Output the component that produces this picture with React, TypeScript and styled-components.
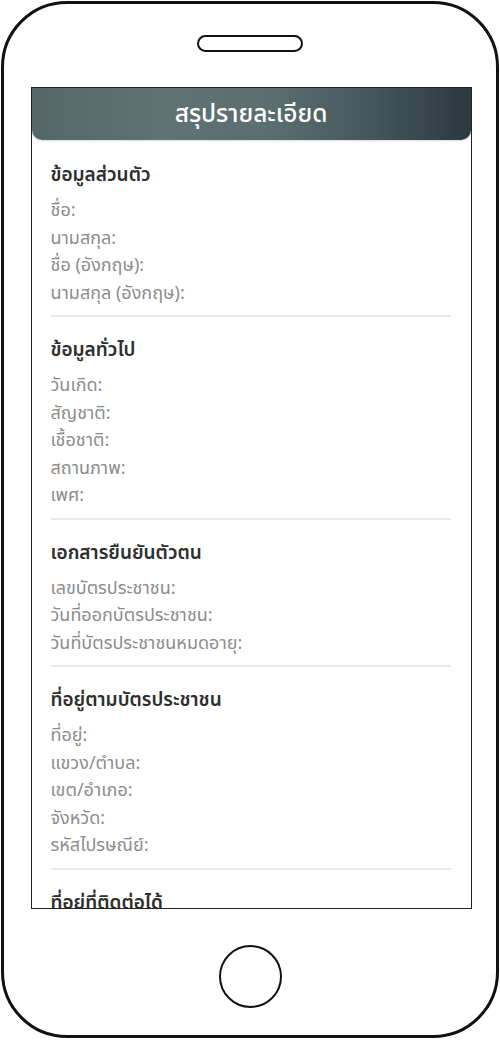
import React from "react";
import styled, { createGlobalStyle } from "styled-components";

const GlobalStyle = createGlobalStyle`
  html, body {
    margin: 0;
    padding: 0;
    background: #fff;
  }
  body {
    font-family: "Noto Sans Thai", "Noto Sans Thai UI", "Noto Sans", "DejaVu Sans", sans-serif;
  }
`;

const sections = [
  {
    title: "ข้อมูลส่วนตัว",
    items: ["ชื่อ:", "นามสกุล:", "ชื่อ (อังกฤษ):", "นามสกุล (อังกฤษ):"],
  },
  {
    title: "ข้อมูลทั่วไป",
    items: ["วันเกิด:", "สัญชาติ:", "เชื้อชาติ:", "สถานภาพ:", "เพศ:"],
  },
  {
    title: "เอกสารยืนยันตัวตน",
    items: ["เลขบัตรประชาชน:", "วันที่ออกบัตรประชาชน:", "วันที่บัตรประชาชนหมดอายุ:"],
  },
  {
    title: "ที่อยู่ตามบัตรประชาชน",
    items: ["ที่อยู่:", "แขวง/ตำบล:", "เขต/อำเภอ:", "จังหวัด:", "รหัสไปรษณีย์:"],
  },
  {
    title: "ที่อยู่ที่ติดต่อได้",
    items: ["ที่อยู่:", "แขวง/ตำบล:"],
  },
];

export default function App() {
  return (
    <>
      <GlobalStyle />
      <Phone>
        <Speaker />
        <Screen>
          <Header>สรุปรายละเอียด</Header>
          <Body>
            {sections.map((s, i) => (
              <Section key={i}>
                <SectionTitle>{s.title}</SectionTitle>
                {s.items.map((label, j) => (
                  <Item key={j}>{label}</Item>
                ))}
              </Section>
            ))}
          </Body>
        </Screen>
        <HomeButton />
      </Phone>
    </>
  );
}

const Phone = styled.div`
  box-sizing: border-box;
  width: 498px;
  height: 1037px;
  margin: 1px 0 0 1px;
  border: 3px solid #111;
  border-radius: 66px;
  display: flex;
  flex-direction: column;
  align-items: center;
  background: #fff;
`;

const Speaker = styled.div`
  box-sizing: border-box;
  width: 106px;
  height: 17px;
  margin-top: 31px;
  border: 2.5px solid #111;
  border-radius: 9px;
`;

const Screen = styled.div`
  box-sizing: border-box;
  width: 441px;
  height: 822px;
  margin-top: 35px;
  margin-left: 2px;
  border: 1.5px solid #222;
  overflow: hidden;
  background: #fff;
`;

const Header = styled.div`
  height: 52px;
  display: flex;
  align-items: center;
  justify-content: center;
  color: #fff;
  font-size: 24.5px;
  font-weight: 500;
  border-radius: 0 0 10px 10px;
  background: linear-gradient(
    90deg,
    #546769 0%,
    #5f7375 30%,
    #5a6d6f 55%,
    #44565a 78%,
    #2b3940 100%
  );
  box-shadow: 0 1px 2px rgba(0, 0, 0, 0.15);
`;

const Body = styled.div`
  padding: 2px 20px 0 19px;
`;

const Section = styled.div`
  padding: 20px 0 8px;
  border-bottom: 2px solid #e9e9e9;
`;

const SectionTitle = styled.div`
  font-size: 19px;
  font-weight: 600;
  line-height: 28px;
  color: #2e2e2e;
  margin-bottom: 7px;
`;

const Item = styled.div`
  font-size: 18px;
  line-height: 27.5px;
  color: #8c8c8c;
`;

const HomeButton = styled.div`
  box-sizing: border-box;
  width: 63px;
  height: 63px;
  margin-top: 36px;
  border: 2.5px solid #111;
  border-radius: 50%;
`;
